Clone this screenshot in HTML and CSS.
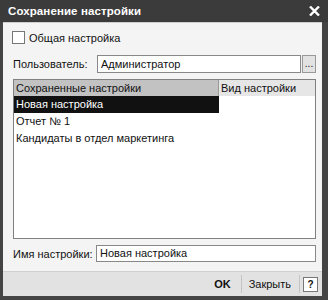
FILE: index.html
```html
<!DOCTYPE html>
<html>
<head>
<meta charset="utf-8">
<link rel="stylesheet" href="styles.css">
</head>
<body>
<div class="window">
  <div class="titlebar">
    <span class="title">Сохранение настройки</span>
    <svg class="close" width="11" height="10" viewBox="0 0 11 10"><path d="M1 0.5 L10 9.5 M10 0.5 L1 9.5" stroke="#fff" stroke-width="2.4" fill="none"/></svg>
  </div>
  <div class="body">
    <div class="content">
      <label class="check-row"><span class="checkbox"></span><span>Общая настройка</span></label>
      <div class="field-row user-row">
        <span class="label">Пользователь:</span>
        <div class="input user-input">Администратор</div>
        <div class="dots">...</div>
      </div>
      <div class="table">
        <div class="thead">
          <div class="th th-main">Сохраненные настройки</div>
          <div class="th th-kind">Вид настройки</div>
        </div>
        <div class="tr selected"><div class="td td-main">Новая настройка</div><div class="td td-kind"></div></div>
        <div class="tr"><div class="td td-main">Отчет № 1</div><div class="td td-kind"></div></div>
        <div class="tr"><div class="td td-main">Кандидаты в отдел маркетинга</div><div class="td td-kind"></div></div>
      </div>
      <div class="field-row name-row">
        <span class="label">Имя настройки:</span>
        <div class="input name-input">Новая настройка</div>
      </div>
    </div>
    <div class="footer">
      <span class="ok">OK</span>
      <span class="sep"></span>
      <span class="close-btn">Закрыть</span>
      <span class="sep"></span>
      <span class="help">?</span>
    </div>
  </div>
</div>
</body>
</html>
```

FILE: styles.css
```css
html, body { margin: 0; padding: 0; }
body {
  font-family: "Liberation Sans", Arial, sans-serif;
  font-size: 11px;
  color: #111;
  background: #3a3a3a;
}
.window {
  width: 328px;
  height: 300px;
  background: #444;
  display: flex;
  flex-direction: column;
}
.titlebar {
  height: 22px;
  flex: none;
  background: #3b3b3b;
  display: flex;
  align-items: center;
  justify-content: space-between;
  padding: 0 8px 0 8px;
  box-sizing: border-box;
  color: #fff;
}
.title { font-weight: bold; font-size: 11.5px; letter-spacing: 0.1px; }
.close { margin-right: 0; margin-top: -1px; }
.body {
  flex: 1;
  margin: 0 6px 5px 3px;
  background: #f4f4f4;
  display: flex;
  flex-direction: column;
  border-top: 1px solid #cfcfcf;
}
.content {
  flex: 1;
  padding: 8px 6px 0 10px;
  display: flex;
  flex-direction: column;
}
.check-row {
  display: flex;
  align-items: center;
  height: 13px;
  gap: 4px;
  margin-left: -1px;
}
.checkbox {
  width: 11px;
  height: 11px;
  border: 1px solid #777;
  background: #fff;
  display: inline-block;
}
.field-row {
  display: flex;
  align-items: center;
}
.user-row { margin-top: 11px; height: 18px; }
.label { width: 84px; flex: none; }
.input {
  background: #fff;
  border: 1px solid #888;
  box-sizing: border-box;
  height: 18px;
  line-height: 16px;
  padding-left: 3px;
}
.user-input { flex: 1; }
.dots {
  width: 14px;
  height: 18px;
  margin-left: 1px;
  box-sizing: border-box;
  border: 1px solid #999;
  background: #e2e2e2;
  text-align: center;
  line-height: 16px;
  font-size: 10px;
}
.table {
  margin-top: 6px;
  height: 160px;
  box-sizing: border-box;
  border: 1px solid #808080;
  background: #fff;
}
.thead, .tr { display: flex; }
.th {
  height: 16px;
  line-height: 16px;
  box-sizing: border-box;
  padding-left: 2px;
}
.th-main { width: 205px; background: #c2c2c2; border-right: 1px solid #9a9a9a; }
.th-kind { flex: 1; background: #e6e6e6; }
.td {
  height: 17px;
  line-height: 17px;
  padding-left: 2px;
  box-sizing: border-box;
}
.td-main { width: 205px; }
.td-kind { flex: 1; }
.tr.selected .td-main { background: #111; color: #fff; }
.name-row { margin-top: 6px; height: 17px; }
.name-row .label { width: 83px; }
.name-input { flex: 1; height: 17px; line-height: 15px; }
.footer {
  height: 24px;
  flex: none;
  margin-top: 9px;
  background: #e2e2e2;
  border-top: 1px solid #d0d0d0;
  display: flex;
  align-items: center;
  justify-content: flex-end;
  padding-right: 4px;
}
.ok { font-weight: bold; font-size: 11px; margin-right: 10px; }
.sep { width: 1px; height: 18px; background: #c4c4c4; }
.close-btn { margin: 0 8px 0 7px; }
.help {
  width: 13px;
  height: 13px;
  border: 1px solid #777;
  background: #fff;
  margin-left: 3px;
  font-weight: bold;
  text-align: center;
  line-height: 13px;
  font-size: 10px;
}
```
